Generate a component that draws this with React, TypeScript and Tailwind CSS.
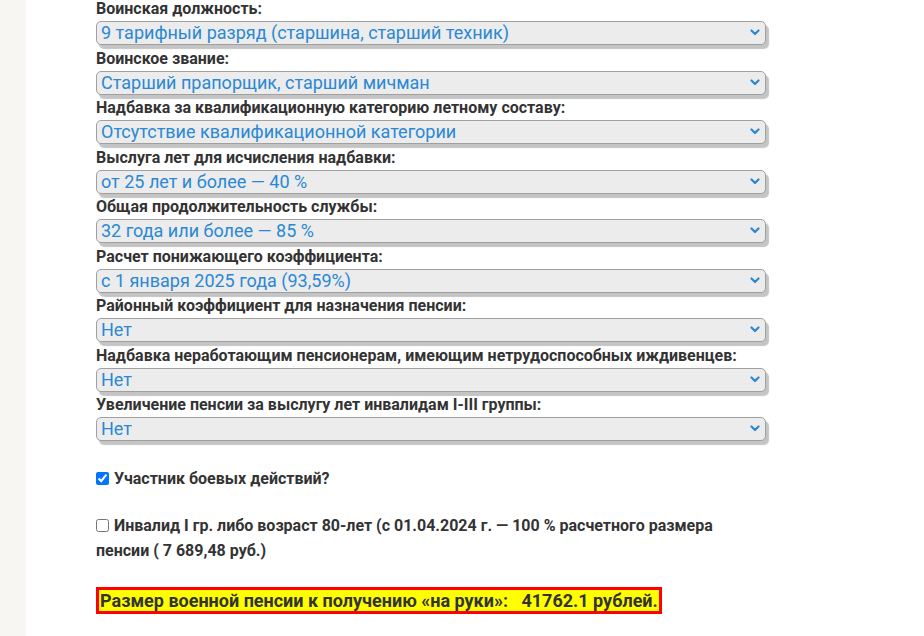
import React from "react";

const fields: { label: string; value: string }[] = [
  { label: "Воинская должность:", value: "9 тарифный разряд (старшина, старший техник)" },
  { label: "Воинское звание:", value: "Старший прапорщик, старший мичман" },
  { label: "Надбавка за квалификационную категорию летному составу:", value: "Отсутствие квалификационной категории" },
  { label: "Выслуга лет для исчисления надбавки:", value: "от 25 лет и более — 40 %" },
  { label: "Общая продолжительность службы:", value: "32 года или более — 85 %" },
  { label: "Расчет понижающего коэффициента:", value: "с 1 января 2025 года (93,59%)" },
  { label: "Районный коэффициент для назначения пенсии:", value: "Нет" },
  { label: "Надбавка неработающим пенсионерам, имеющим нетрудоспособных иждивенцев:", value: "Нет" },
  { label: "Увеличение пенсии за выслугу лет инвалидам I-III группы:", value: "Нет" },
];

function Select({ value }: { value: string }) {
  return (
    <div className="relative w-[670px] h-[24px]">
      <select
        defaultValue={value}
        className="appearance-none w-full h-full bg-[#ececec] border border-[#a0a0a0] rounded-[5px] shadow-[3px_4px_1px_#c4c4c4] pl-[4px] pr-6 text-[18px] leading-[22px] text-[#2a88d4] outline-none"
        style={{ fontFamily: "Roboto, 'Liberation Sans', sans-serif" }}
      >
        <option>{value}</option>
      </select>
      <svg
        className="absolute right-[6px] top-[8px] pointer-events-none"
        width="10"
        height="7"
        viewBox="0 0 10 7"
      >
        <path d="M1.5 1.5 L5 5 L8.5 1.5" fill="none" stroke="#2a88d4" strokeWidth="2.2" strokeLinecap="round" strokeLinejoin="round" />
      </svg>
    </div>
  );
}

export default function App() {
  return (
    <div
      className="w-[924px] h-[636px] overflow-hidden bg-white flex text-[#333]"
      style={{ fontFamily: "Roboto, 'Liberation Sans', sans-serif" }}
    >
      <div className="w-[26px] shrink-0 bg-[#f7f6f3]" />
      <div className="pl-[70px] w-[745px] -mt-[4px]">
        {fields.map((f) => (
          <div key={f.label}>
            <div className="text-[16px] font-bold leading-[25px] h-[25px] whitespace-nowrap">{f.label}</div>
            <Select value={f.value} />
            <div className="h-[0.5px]" />
          </div>
        ))}
        <div className="mt-[24px] flex items-center text-[16px] font-bold leading-[25px]">
          <input type="checkbox" defaultChecked className="w-[13px] h-[13px] m-0 mr-[5px] accent-[#0075ff]" />
          <span>Участник боевых действий?</span>
        </div>
        <div className="mt-[22px] text-[16px] font-bold leading-[25px] w-[640px]">
          <input type="checkbox" className="w-[13px] h-[13px] m-0 mr-[5px] align-[-1px]" />
          Инвалид I гр. либо возраст 80-лет (с 01.04.2024 г. — 100 % расчетного размера пенсии ( 7 689,48 руб.)
        </div>
        <div className="mt-[24px]">
          <span className="inline-block border-[3px] border-[#ff0000] bg-[#ffff00] px-[1px] text-[18px] font-bold leading-[21px] text-[#333] whitespace-pre">
            {"Размер военной пенсии к получению «на руки»:   41762.1 рублей."}
          </span>
        </div>
      </div>
    </div>
  );
}
